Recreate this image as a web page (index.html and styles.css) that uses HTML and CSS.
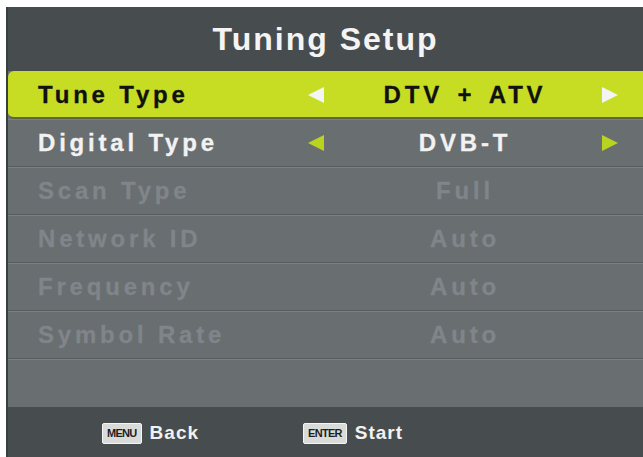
FILE: index.html
```html
<!DOCTYPE html>
<html>
<head>
<meta charset="utf-8">
<link rel="stylesheet" href="styles.css">
</head>
<body>
<div class="panel">
  <div class="header">Tuning Setup</div>
  <div class="rows">
    <div class="row selected">
      <span class="label">Tune Type</span>
      <span class="arrow"><i class="tri tri-left"></i></span>
      <span class="value">DTV + ATV</span>
      <span class="arrow"><i class="tri tri-right"></i></span>
    </div>
    <div class="row active">
      <span class="label">Digital Type</span>
      <span class="arrow"><i class="tri tri-left"></i></span>
      <span class="value">DVB-T</span>
      <span class="arrow"><i class="tri tri-right"></i></span>
    </div>
    <div class="row dim">
      <span class="label">Scan Type</span>
      <span class="arrow"></span>
      <span class="value">Full</span>
      <span class="arrow"></span>
    </div>
    <div class="row dim">
      <span class="label">Network ID</span>
      <span class="arrow"></span>
      <span class="value">Auto</span>
      <span class="arrow"></span>
    </div>
    <div class="row dim">
      <span class="label">Frequency</span>
      <span class="arrow"></span>
      <span class="value">Auto</span>
      <span class="arrow"></span>
    </div>
    <div class="row dim">
      <span class="label">Symbol Rate</span>
      <span class="arrow"></span>
      <span class="value">Auto</span>
      <span class="arrow"></span>
    </div>
    <div class="row empty"></div>
  </div>
  <div class="footer">
    <div class="hint"><span class="key">MENU</span><span class="hint-text">Back</span></div>
    <div class="hint"><span class="key">ENTER</span><span class="hint-text">Start</span></div>
  </div>
</div>
</body>
</html>
```

FILE: styles.css
```css
html, body {
  margin: 0;
  padding: 0;
  background: #ffffff;
}
body {
  font-family: "Liberation Sans", Arial, sans-serif;
}
.panel {
  margin: 7px 0 0 6px;
  width: 637px;
  height: 450px;
  background: #696e71;
  border-left: 2px solid #3a3f40;
  box-sizing: border-box;
  display: flex;
  flex-direction: column;
  overflow: hidden;
}
.header {
  height: 64px;
  background: #474d4f;
  color: #f4f4f4;
  font-weight: bold;
  font-size: 32px;
  letter-spacing: 2px;
  display: flex;
  align-items: center;
  justify-content: center;
  box-sizing: border-box;
}
.rows {
  display: flex;
  flex-direction: column;
}
.row {
  height: 48px;
  display: flex;
  align-items: center;
  box-sizing: border-box;
  border-bottom: 1px solid #585c5f;
  box-shadow: inset 0 1px 0 #7b8083;
  font-weight: bold;
  font-size: 24px;
  letter-spacing: 3.8px;
  color: #80858a;
  padding-top: 1px;
  -webkit-text-stroke: 0.3px currentColor;
}
.row.selected {
  background: #c6dd24;
  color: #111;
  border-radius: 6px 0 0 6px;
  box-shadow: none;
  border-bottom: 2px solid #5e6640;
}
.row.active {
  color: #f2f2f2;
}
.row.empty {
  height: 48px;
  border-bottom: none;
}
.label {
  flex: none;
  width: 300px;
  padding-left: 30px;
  box-sizing: border-box;
}
.arrow {
  flex: none;
  width: 18px;
  height: 18px;
  display: flex;
  align-items: center;
}
.tri {
  display: block;
  flex: none;
  width: 0;
  height: 0;
  border-top: 8px solid transparent;
  border-bottom: 8px solid transparent;
}
.tri-left {
  border-right: 16px solid #f4f4f4;
}
.tri-right {
  border-left: 16px solid #f4f4f4;
}
.active .tri-left {
  border-right-color: #b9d41e;
}
.active .tri-right {
  border-left-color: #b9d41e;
}
.value {
  flex: none;
  width: 276px;
  text-align: center;
  padding-left: 2px;
  word-spacing: 4px;
  box-sizing: border-box;
}
.footer {
  flex: 1;
  background: #474d4f;
  display: flex;
  align-items: center;
  padding-left: 94px;
  gap: 104px;
  padding-top: 2px;
  box-sizing: border-box;
}
.hint {
  display: flex;
  align-items: center;
  gap: 8px;
}
.key {
  background: #d9dbd9;
  color: #1e1e1e;
  border: 1px solid #f4f4f4;
  border-radius: 2px;
  font-family: "Liberation Sans Narrow", "Liberation Sans", Arial, sans-serif;
  font-weight: bold;
  font-size: 11px;
  letter-spacing: -0.7px;
  padding: 4px 4px;
  line-height: 11px;
}
.hint-text {
  color: #f2f2f2;
  font-weight: bold;
  font-size: 19px;
  letter-spacing: 1px;
}
```
